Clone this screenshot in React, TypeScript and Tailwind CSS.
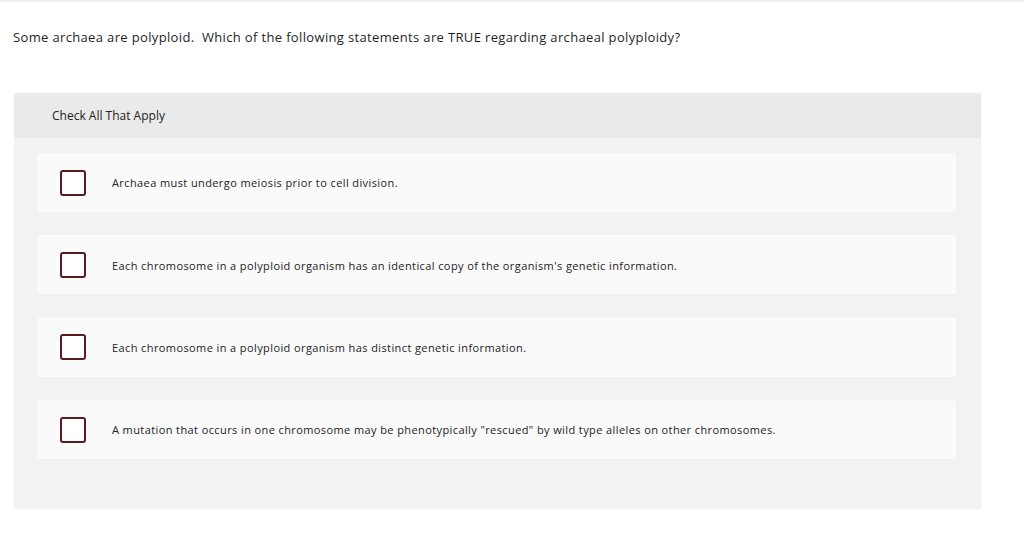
const options = [
  "Archaea must undergo meiosis prior to cell division.",
  "Each chromosome in a polyploid organism has an identical copy of the organism's genetic information.",
  "Each chromosome in a polyploid organism has distinct genetic information.",
  'A mutation that occurs in one chromosome may be phenotypically "rescued" by wild type alleles on other chromosomes.',
];

export default function App() {
  return (
    <div
      className="w-[1024px] h-[545px] bg-white text-[#222] overflow-hidden"
      style={{ fontFamily: "'Open Sans', 'Liberation Sans', sans-serif" }}
    >
      <div className="border-t-2 border-[#eeeeee]" />
      <p className="pl-[13px] pt-[25px] text-[13px] leading-[20px] tracking-[0.35px] text-[#1f1f1f]">
        Some archaea are polyploid.&nbsp; Which of the following statements are TRUE regarding archaeal polyploidy?
      </p>

      <div className="ml-[14px] mt-[46px] w-[967px] h-[416px] bg-[#f2f2f2] rounded-[3px] shadow-[0_0_2px_rgba(0,0,0,0.06)]">
        <div className="h-[45px] bg-[#eaeaea] rounded-t-[3px] pl-[38px] flex items-center text-[12px] text-[#222]">
          Check All That Apply
        </div>
        <div className="pt-[15px] pl-[23px] pr-[25px] flex flex-col gap-[23.4px]">
          {options.map((o) => (
            <label
              key={o}
              className="h-[59px] bg-[#fafafa] rounded-[3px] flex items-center pl-[23px] cursor-pointer"
            >
              <span className="w-[26px] h-[26px] border-2 border-[#5b1a1f] rounded-[3px] bg-white shrink-0" />
              <span className="ml-[26px] pt-[2px] text-[11px] tracking-[0.4px] text-[#222]">{o}</span>
            </label>
          ))}
        </div>
      </div>
    </div>
  );
}
